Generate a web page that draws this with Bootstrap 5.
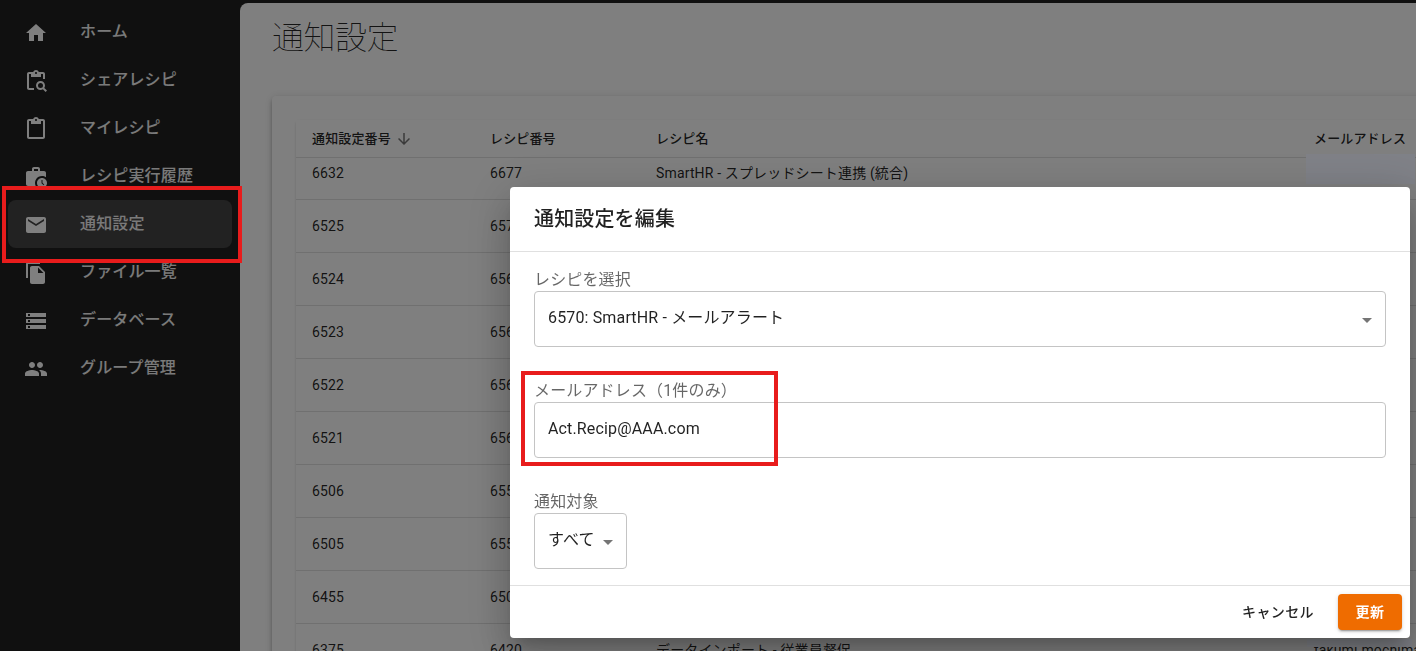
<!DOCTYPE html>
<html lang="ja">
<head>
<meta charset="utf-8">
<meta name="viewport" content="width=device-width, initial-scale=1">
<title>通知設定</title>
<link href="https://cdn.jsdelivr.net/npm/bootstrap@5.3.0/dist/css/bootstrap.min.css" rel="stylesheet">
<style>
body{font-family:Roboto,"Noto Sans CJK JP",sans-serif;background:#212121;color:rgba(0,0,0,.87);letter-spacing:.15px;height:651px;overflow:hidden}
.shell{height:651px}
.side{width:240px;padding:8px;color:#f5f5f5;font-weight:500;font-size:16px}
.side .item{height:48px;border-radius:8px;padding:0 16px;line-height:24px}
.side .item span{margin-left:32px;padding-bottom:1px}
.side .item.active{background:#444}
.side svg{width:24px;height:24px;fill:#fff;margin-top:1px}
.content-pane{margin-top:3px;background:#fff;border-radius:8px 0 0 0;padding:8px 0 0 32px;overflow:hidden}
.page-title{font-size:32px;line-height:48px;font-weight:300;letter-spacing:-.5px;margin:0 0 37px;font-family:"Noto Sans CJK JP Thin","Noto Sans CJK JP DemiLight","Noto Sans CJK JP",sans-serif}
.paper{width:1230px;background:#fff;border-radius:4px;box-shadow:0 2px 4px -1px rgba(0,0,0,.2),0 4px 5px rgba(0,0,0,.14),0 1px 10px rgba(0,0,0,.12);padding:24px}
.paper .inner{background:#fff;border-radius:4px;box-shadow:0 2px 1px -1px rgba(0,0,0,.2),0 1px 1px rgba(0,0,0,.14),0 1px 3px rgba(0,0,0,.12)}
.grid-row{display:grid;grid-template-columns:178px 166px 658px 1fr;height:53px;border-bottom:1px solid #e0e0e0;font-size:14px;line-height:20px;align-items:center;white-space:nowrap}
.grid-row>div{padding-left:16px}
.grid-row.head{height:38px;font-size:13px;font-weight:500;background:#fff;position:relative;z-index:1}
.rows{margin-top:-11px}
.dim{position:fixed;inset:0;background:rgba(0,0,0,.5);z-index:5}
.redact{position:fixed;background:#808288;z-index:6}
.dlg{position:fixed;left:510px;top:187px;width:900px;height:451px;background:#fff;border-radius:4px;z-index:7;box-shadow:0 11px 15px -7px rgba(0,0,0,.2),0 24px 38px 3px rgba(0,0,0,.14),0 9px 46px 8px rgba(0,0,0,.12)}
.dlg-head{height:64px;padding:0 24px;font-size:20px;font-weight:500;letter-spacing:.15px}
.dlg-body{height:335px;border-top:1px solid #e0e0e0;border-bottom:1px solid #e0e0e0;padding:16px 24px}
.dlg-body label{display:block;font-size:16px;line-height:23px;color:rgba(0,0,0,.6)}
.field{height:56px;border:1px solid #c4c4c4;border-radius:4px;padding:0 13px 2px;margin-bottom:32px;font-size:16px}
.field svg{width:24px;height:24px;fill:#757575;margin:3px -7px 0 0}
.dlg-foot{height:52px;padding:8px;font-size:14px;font-weight:500;letter-spacing:.4px}
.ok{width:64px;height:36px;border-radius:4px;background:#ef6c00;color:#fff;font-weight:700;box-shadow:0 3px 1px -2px rgba(0,0,0,.2),0 2px 2px rgba(0,0,0,.14),0 1px 5px rgba(0,0,0,.12)}
.mark-box{position:fixed;border:4px solid #e81c1c;z-index:9}
</style>
</head>
<body>
<div class="shell d-flex">
 <nav class="side flex-shrink-0">
  <div class="item d-flex align-items-center"><svg viewBox="0 0 24 24"><path d="M10 20v-6h4v6h5v-8h3L12 3 2 12h3v8z"/></svg><span>ホーム</span></div>
  <div class="item d-flex align-items-center"><svg viewBox="0 0 24 24"><path d="M5 5h2v3h10V5h2v5h2V5c0-1.100-.9-2-2-2h-4.180C14.400 1.840 13.300 1 12 1s-2.400.84-2.820 2H5c-1.100 0-2 .9-2 2v14c0 1.100.9 2 2 2h5v-2H5V5zm7-2c.55 0 1 .45 1 1s-.45 1-1 1-1-.45-1-1 .45-1 1-1z"/><path d="M20.300 18.900c.4-.7.7-1.500.7-2.400 0-2.500-2-4.500-4.500-4.500S12 14 12 16.500s2 4.500 4.500 4.500c.9 0 1.700-.3 2.400-.7l2.700 2.700 1.400-1.400-2.700-2.700zm-3.800.1a2.500 2.500 0 1 1 0-5 2.500 2.500 0 0 1 0 5z"/></svg><span>シェアレシピ</span></div>
  <div class="item d-flex align-items-center"><svg viewBox="0 0 24 24"><path d="M19 2h-4.180C14.400.84 13.300 0 12 0S9.600.84 9.180 2H5c-1.100 0-2 .9-2 2v16c0 1.100.9 2 2 2h14c1.100 0 2-.9 2-2V4c0-1.100-.9-2-2-2zm-7 0c.55 0 1 .45 1 1s-.45 1-1 1-1-.45-1-1 .45-1 1-1zm7 18H5V4h2v3h10V4h2v16z"/></svg><span>マイレシピ</span></div>
  <div class="item d-flex align-items-center"><svg viewBox="0 0 24 24"><path d="M18 11c1.490 0 2.870.47 4 1.260V8c0-1.110-.89-2-2-2h-4V4c0-1.110-.89-2-2-2h-4c-1.110 0-2 .89-2 2v2H4c-1.110 0-1.990.89-1.990 2L2 19c0 1.110.89 2 2 2h7.680A6.995 6.995 0 0 1 18 11zm-8-7h4v2h-4V4z"/><path d="M18 13c-2.760 0-5 2.240-5 5s2.240 5 5 5 5-2.240 5-5-2.240-5-5-5zm1.650 7.350L17.500 18.200V15h1v2.790l1.850 1.850-.7.710z"/></svg><span>レシピ実行履歴</span></div>
  <div class="item active d-flex align-items-center"><svg viewBox="0 0 24 24"><path d="M20 4H4c-1.100 0-1.990.9-1.990 2L2 18c0 1.100.9 2 2 2h16c1.100 0 2-.9 2-2V6c0-1.100-.9-2-2-2zm0 4-8 5-8-5V6l8 5 8-5v2z"/></svg><span>通知設定</span></div>
  <div class="item d-flex align-items-center"><svg viewBox="0 0 24 24"><path d="M16 1H4c-1.100 0-2 .9-2 2v14h2V3h12V1zm-1 4 6 6v10c0 1.100-.9 2-2 2H7.990C6.890 23 6 22.100 6 21l.01-14c0-1.100.89-2 1.990-2h7zm-1 7h5.500L14 6.500V12z"/></svg><span>ファイル一覧</span></div>
  <div class="item d-flex align-items-center"><svg viewBox="0 0 24 24"><path d="M2 20h20v-4H2v4zm2-3h2v2H4v-2zM2 4v4h20V4H2zm4 3H4V5h2v2zm-4 7h20v-4H2v4zm2-3h2v2H4v-2z"/></svg><span>データベース</span></div>
  <div class="item d-flex align-items-center"><svg viewBox="0 0 24 24"><path d="M16 11c1.660 0 2.990-1.340 2.990-3S17.660 5 16 5s-3 1.340-3 3 1.340 3 3 3zm-8 0c1.660 0 2.990-1.340 2.990-3S9.660 5 8 5 5 6.340 5 8s1.340 3 3 3zm0 2c-2.330 0-7 1.170-7 3.500V19h14v-2.500C15 14.170 10.330 13 8 13zm8 0c-.29 0-.62.02-.97.05 1.160.84 1.970 1.970 1.970 3.450V19h6v-2.500c0-2.330-4.670-3.500-7-3.500z"/></svg><span>グループ管理</span></div>
 </nav>
 <main class="content-pane flex-grow-1">
  <h1 class="page-title">通知設定</h1>
  <section class="paper"><div class="inner">
   <div class="grid-row head"><div class="d-flex align-items-center">通知設定番号<svg class="ms-1" width="18" height="18" viewBox="0 0 24 24" fill="#757575"><path d="m20 12-1.410-1.410L13 16.170V4h-2v12.170l-5.580-5.590L4 12l8 8z"/></svg></div><div>レシピ番号</div><div>レシピ名</div><div>メールアドレス</div></div>
   <div class="rows">
    <div class="grid-row"><div>6632</div><div>6677</div><div>SmartHR - スプレッドシート連携 (統合)</div><div class="mail"><span class="tail">x</span></div></div>
    <div class="grid-row"><div>6525</div><div>6570</div><div></div><div class="mail"><span class="tail">co</span></div></div>
    <div class="grid-row"><div>6524</div><div>6569</div><div></div><div class="mail"><span class="tail">co</span></div></div>
    <div class="grid-row"><div>6523</div><div>6568</div><div></div><div class="mail"><span class="tail">co</span></div></div>
    <div class="grid-row"><div>6522</div><div>6567</div><div></div><div class="mail"><span class="tail">co</span></div></div>
    <div class="grid-row"><div>6521</div><div>6566</div><div></div><div class="mail"><span class="tail">co</span></div></div>
    <div class="grid-row"><div>6506</div><div>6551</div><div></div><div class="mail"><span class="tail">co</span></div></div>
    <div class="grid-row"><div>6505</div><div>6550</div><div></div><div class="mail"><span class="tail">co</span></div></div>
    <div class="grid-row"><div>6455</div><div>6500</div><div></div><div class="mail"><span class="tail">co</span></div></div>
    <div class="grid-row"><div>6375</div><div>6420</div><div>データインポート - 従業員督促</div><div>takumi.mochimaru</div></div>
   </div>
  </div></section>
 </main>
</div>
<div class="dim"></div>
<div class="redact" style="left:1306px;top:154px;width:109px;height:30px"></div>
<div class="redact" style="left:1307px;top:639px;width:105px;height:8px"></div>
<div class="dlg" role="dialog">
 <div class="dlg-head d-flex align-items-center">通知設定を編集</div>
 <div class="dlg-body">
  <label>レシピを選択</label>
  <div class="field d-flex align-items-center justify-content-between"><span>6570: SmartHR - メールアラート</span><svg viewBox="0 0 24 24"><path d="m7 10 5 5 5-5z"/></svg></div>
  <label>メールアドレス（1件のみ）</label>
  <div class="field d-flex align-items-center"><span>Act.Recip@AAA.com</span></div>
  <label>通知対象</label>
  <div class="field d-flex align-items-center justify-content-between" style="width:93px"><span>すべて</span><svg viewBox="0 0 24 24"><path d="m7 10 5 5 5-5z"/></svg></div>
 </div>
 <div class="dlg-foot d-flex align-items-center justify-content-end"><span class="me-4">キャンセル</span><div class="ok d-flex align-items-center justify-content-center">更新</div></div>
</div>
<div class="mark-box" style="left:2px;top:186px;width:240px;height:77px"></div>
<div class="mark-box" style="left:521px;top:371px;width:257px;height:95px"></div>
<script src="https://cdn.jsdelivr.net/npm/bootstrap@5.3.0/dist/js/bootstrap.bundle.min.js"></script>
</body>
</html>
